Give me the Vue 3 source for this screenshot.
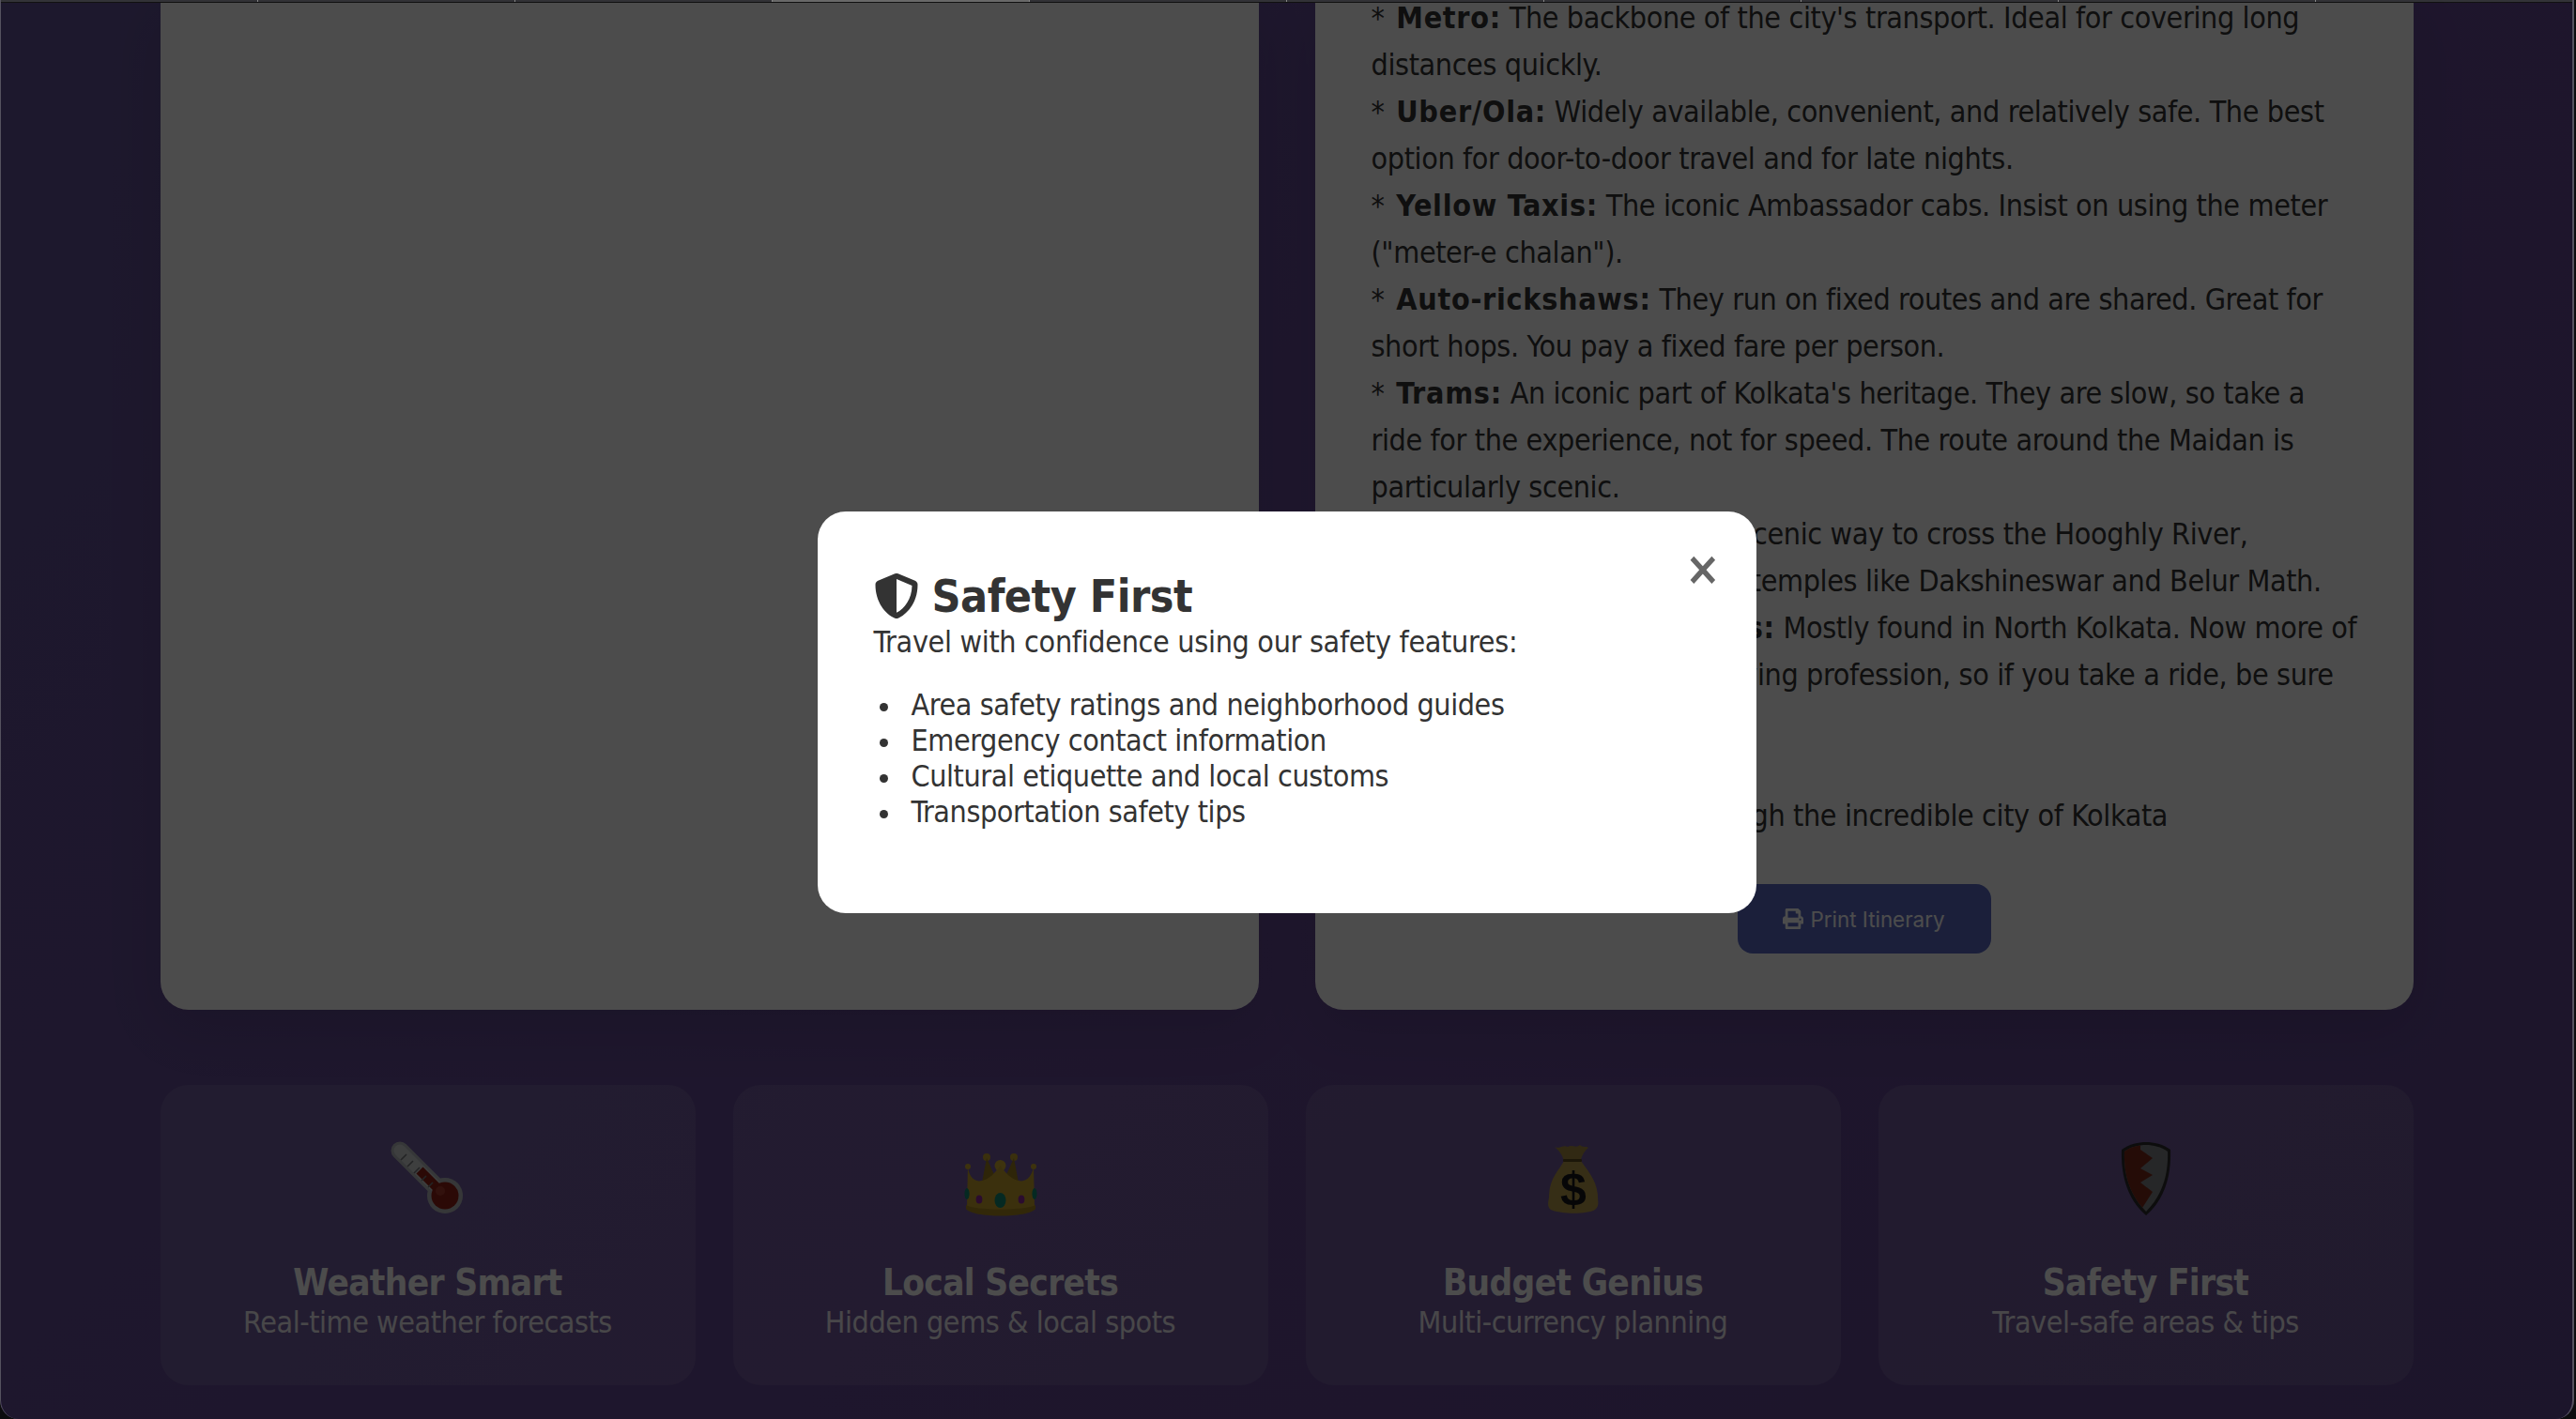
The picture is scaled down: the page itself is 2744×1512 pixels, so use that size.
<template>
  <div class="window">
    <div class="tabs">
      <span v-for="n in 10" :key="n" class="tab" :class="{ active: n === 4 }"></span>
    </div>
    <div class="page">
      <div class="results">
        <div class="card"></div>
        <div class="card itinerary">
          <div v-for="item in transport" :key="item.name" class="line"><span class="star">*</span> <b>{{ item.name }}:</b> {{ item.text }}</div>
          <p class="closing">Have a perfect journey through the incredible city of Kolkata</p>
          <button class="print-btn">
            <svg class="print-icon" viewBox="0 0 512 512"><path fill="currentColor" d="M448 192V77.25c0-8.49-3.37-16.62-9.37-22.63L393.37 9.37c-6-6-14.14-9.37-22.63-9.37H96C78.33 0 64 14.33 64 32v160c-35.35 0-64 28.65-64 64v112c0 8.84 7.16 16 16 16h48v96c0 17.67 14.33 32 32 32h320c17.67 0 32-14.33 32-32v-96h48c8.84 0 16-7.16 16-16V256c0-35.35-28.65-64-64-64zm-64 256H128v-96h256v96zm0-224H128V64h192v48c0 8.84 7.16 16 16 16h48v96zm48 72c-13.25 0-24-10.75-24-24 0-13.26 10.75-24 24-24s24 10.74 24 24c0 13.25-10.75 24-24 24z" /></svg>
            Print Itinerary
          </button>
        </div>
      </div>

      <div class="features">
        <div class="feature">
          <svg class="emoji" viewBox="0 0 80 80">
            <line x1="10" y1="10" x2="56" y2="56" stroke="#b4babd" stroke-width="19" stroke-linecap="round" />
            <circle cx="58" cy="58" r="19" fill="#b4babd" />
            <line x1="10" y1="10" x2="54" y2="54" stroke="#cfd2d4" stroke-width="13" stroke-linecap="round" />
            <line x1="31" y1="31" x2="56" y2="56" stroke="#8f2016" stroke-width="10" />
            <circle cx="58" cy="58" r="14.5" fill="#8f2016" />
            <circle cx="53" cy="53" r="5" fill="#a83a2e" />
            <path d="M11 20l6-6M18 27l6-6M25 34l6-6M33 42l5-5M40 49l5-5" stroke="#77797c" stroke-width="1.6" />
          </svg>
          <h3>Weather Smart</h3>
          <p>Real-time weather forecasts</p>
        </div>
        <div class="feature">
          <svg class="emoji" viewBox="0 0 80 80">
            <circle cx="25" cy="17" r="4" fill="#c4a02c" />
            <circle cx="54" cy="17" r="4" fill="#c4a02c" />
            <path d="M20 44L25 18L35 40ZM59 44L54 18L44 40Z" fill="#9a7c1e" />
            <circle cx="5" cy="27" r="3" fill="#cba82e" />
            <circle cx="75" cy="27" r="3" fill="#cba82e" />
            <circle cx="39.5" cy="26" r="6" fill="#cfac30" />
            <path d="M5 27C6 38 12 44 20 42C27 41 34 34 39.5 26C45 34 52 41 59 42C67 44 73 38 75 27L76 70C66 78 14 78 4 70Z" fill="#c6a22c" />
            <path d="M3 68C12 74 67 74 77 68L77 72C70 82 10 82 3 72Z" fill="#a88820" />
            <ellipse cx="4" cy="56" rx="2.6" ry="6" fill="#128a72" />
            <ellipse cx="76" cy="56" rx="2.6" ry="6" fill="#128a72" />
            <ellipse cx="17" cy="62" rx="3.4" ry="4.6" fill="#8f2a9c" />
            <ellipse cx="62" cy="62" rx="3.4" ry="4.6" fill="#8f2a9c" />
            <ellipse cx="39.5" cy="63" rx="6" ry="8" fill="#128a72" />
          </svg>
          <h3>Local Secrets</h3>
          <p>Hidden gems &amp; local spots</p>
        </div>
        <div class="feature">
          <svg class="emoji" viewBox="0 0 80 80">
            <path d="M20 6C25 9 29 3 34 6C38 3 43 8 47 4C50 7 54 5 56 7C51 11 49 16 47 22L30 22C29 16 26 11 20 6Z" fill="#a38b42" />
            <path d="M30 21C24 32 14 40 14 60C13 66 12 70 16 73C28 78 54 78 63 73C68 69 66 64 66 60C66 42 54 30 48 21Z" fill="#b59a4c" />
            <rect x="29" y="19" width="20" height="3" rx="1" fill="#5c4a1e" />
            <text x="40" y="68" text-anchor="middle" class="dollar">$</text>
          </svg>
          <h3>Budget Genius</h3>
          <p>Multi-currency planning</p>
        </div>
        <div class="feature">
          <svg class="emoji" viewBox="0 0 80 80">
            <path d="M14 9C22 3 32 1 40 1C48 1 58 3 66 9C67 36 60 62 40 79C20 62 13 36 14 9Z" fill="#2c2c2e" />
            <path d="M17 11C24 6 32 4 40 4C48 4 56 6 63 11C64 36 57 58 40 75C23 58 16 36 17 11Z" fill="#7f8285" />
            <path d="M17 11C22 7 28 5 34 4.500L34 9L47 18L34 29L47 36L34 44L47 54L36 71L40 75C23 58 16 36 17 11Z" fill="#7e2a1a" />
          </svg>
          <h3>Safety First</h3>
          <p>Travel-safe areas &amp; tips</p>
        </div>
      </div>
    </div>

    <div class="overlay">
      <div class="modal">
        <span class="close">&times;</span>
        <h2>
          <svg class="shield" viewBox="0 0 512 512"><path fill="currentColor" d="M466.5 83.700l-192-80a48.150 48.150 0 0 0-36.900 0l-192 80C27.700 91.100 16 108.600 16 128c0 198.500 114.500 335.700 221.500 380.300 11.800 4.900 25.100 4.900 36.900 0C360.100 472.600 496 349.300 496 128c0-19.400-11.700-36.900-29.500-44.300zM256.100 446.300l-.1-381 175.900 73.300c-3.300 151.400-82.100 261.100-175.800 307.700z" /></svg>
          Safety First
        </h2>
        <p>Travel with confidence using our safety features:</p>
        <ul>
          <li>Area safety ratings and neighborhood guides</li>
          <li>Emergency contact information</li>
          <li>Cultural etiquette and local customs</li>
          <li>Transportation safety tips</li>
        </ul>
      </div>
    </div>
  </div>
</template>

<script setup>
const transport = [
  { name: 'Metro', text: "The backbone of the city's transport. Ideal for covering long distances quickly." },
  { name: 'Uber/Ola', text: 'Widely available, convenient, and relatively safe. The best option for door-to-door travel and for late nights.' },
  { name: 'Yellow Taxis', text: 'The iconic Ambassador cabs. Insist on using the meter ("meter-e chalan").' },
  { name: 'Auto-rickshaws', text: 'They run on fixed routes and are shared. Great for short hops. You pay a fixed fare per person.' },
  { name: 'Trams', text: "An iconic part of Kolkata's heritage. They are slow, so take a ride for the experience, not for speed. The route around the Maidan is particularly scenic." },
  { name: 'Ferries', text: 'A rather cheap, scenic way to cross the Hooghly River, connecting to the renowned temples like Dakshineswar and Belur Math.' },
  { name: 'Hand-pulled Rickshaws', text: 'Mostly found in North Kolkata. Now more of a charming novelty, and a dying profession, so if you take a ride, be sure to tip well.' }
]
</script>

<style>
body {
  margin: 0;
  background: #0c0c0e;
}
</style>

<style scoped>
.window {
  position: relative;
  box-sizing: border-box;
  width: 2742px;
  height: 1512px;
  overflow: hidden;
  border-left: 1px solid #55525e;
  border-right: 2px solid #55525e;
  border-radius: 0 0 20px 20px;
  background: linear-gradient(135deg, #625297, #664a96 55%, #60478f);
  font-family: "DejaVu Sans", Tahoma, sans-serif;
  font-stretch: condensed;
}

.tabs {
  display: flex;
  height: 2px;
  background: #333338;
  border-bottom: 1px solid #111;
}

.tab {
  flex: none;
  width: 273px;
  border-right: 1px solid #8a8a8a;
}

.tab.active {
  background: #6b6b6b;
}

.page {
  width: 2400px;
  margin: 0 auto;
}

.results {
  display: grid;
  grid-template-columns: 1170px 1170px;
  gap: 60px;
  height: 1073px;
}

.card {
  display: flex;
  flex-direction: column;
  justify-content: flex-end;
  align-items: flex-start;
  box-sizing: border-box;
  height: 1073px;
  overflow: hidden;
  padding: 0 60px 60px;
  background: #fff;
  border-radius: 0 0 30px 30px;
  box-shadow: 0 20px 60px rgba(0, 0, 0, 0.1);
  color: #333;
  font-size: 32px;
  line-height: 50px;
  letter-spacing: -0.38px;
}

.line {
  flex: none;
}

.star {
  margin-right: 4px;
}

.line b {
  letter-spacing: 0.7px;
}

.closing {
  flex: none;
  margin: 50px 0 0;
}

.print-btn {
  display: flex;
  align-items: center;
  justify-content: center;
  gap: 7px;
  flex: none;
  width: 270px;
  height: 74px;
  margin: 48px auto 0;
  padding: 0;
  border: none;
  border-radius: 16px;
  background: #5a6ac4;
  color: #fff;
  font-family: Inter, sans-serif;
  font-stretch: normal;
  font-size: 22.4px;
  letter-spacing: 0;
}

.print-icon {
  width: 22px;
  height: 22px;
}

.features {
  display: grid;
  grid-template-columns: repeat(4, 570px);
  gap: 40px;
  margin-top: 80px;
}

.feature {
  box-sizing: border-box;
  height: 320px;
  padding-top: 60px;
  background: rgba(255, 255, 255, 0.1);
  border-radius: 30px;
  color: #fff;
  text-align: center;
}

.emoji {
  display: block;
  width: 80px;
  height: 80px;
  margin: 0 auto 48px;
}

.dollar {
  fill: #17171a;
  font-family: "Liberation Sans", sans-serif;
  font-size: 50px;
  font-weight: 700;
}

.feature h3 {
  margin: 0;
  font-size: 38.4px;
  line-height: 46px;
  letter-spacing: -0.65px;
}

.feature p {
  margin: 0;
  font-size: 32px;
  line-height: 38px;
  letter-spacing: -0.45px;
  opacity: 0.9;
}

.overlay {
  position: absolute;
  inset: 3px 0 0;
  display: flex;
  align-items: center;
  justify-content: center;
  padding-top: 3px;
  background: rgba(0, 0, 0, 0.7);
}

.modal {
  position: relative;
  box-sizing: border-box;
  width: 1000px;
  height: 428px;
  padding: 60px;
  background: #fff;
  border-radius: 30px;
  color: #333;
  font-size: 32px;
  line-height: 38px;
  letter-spacing: -0.32px;
}

.modal h2 {
  display: flex;
  align-items: center;
  gap: 14px;
  margin: 0;
  font-size: 48px;
  line-height: 60px;
  letter-spacing: -0.55px;
}

.shield {
  width: 48px;
  height: 48px;
}

.modal p {
  margin: 0;
}

.modal ul {
  margin: 29px 0 0;
  padding: 0 0 0 40px;
  list-style: none;
  letter-spacing: -0.42px;
}

.modal li::before {
  content: "";
  display: inline-block;
  width: 9px;
  height: 9px;
  margin: 0 24.5px 0 -33.5px;
  border-radius: 50%;
  background: #333;
  vertical-align: middle;
}

.close {
  position: absolute;
  top: 36px;
  right: 38px;
  color: #666;
  font-size: 50px;
  font-weight: 700;
  line-height: 50px;
}
</style>
